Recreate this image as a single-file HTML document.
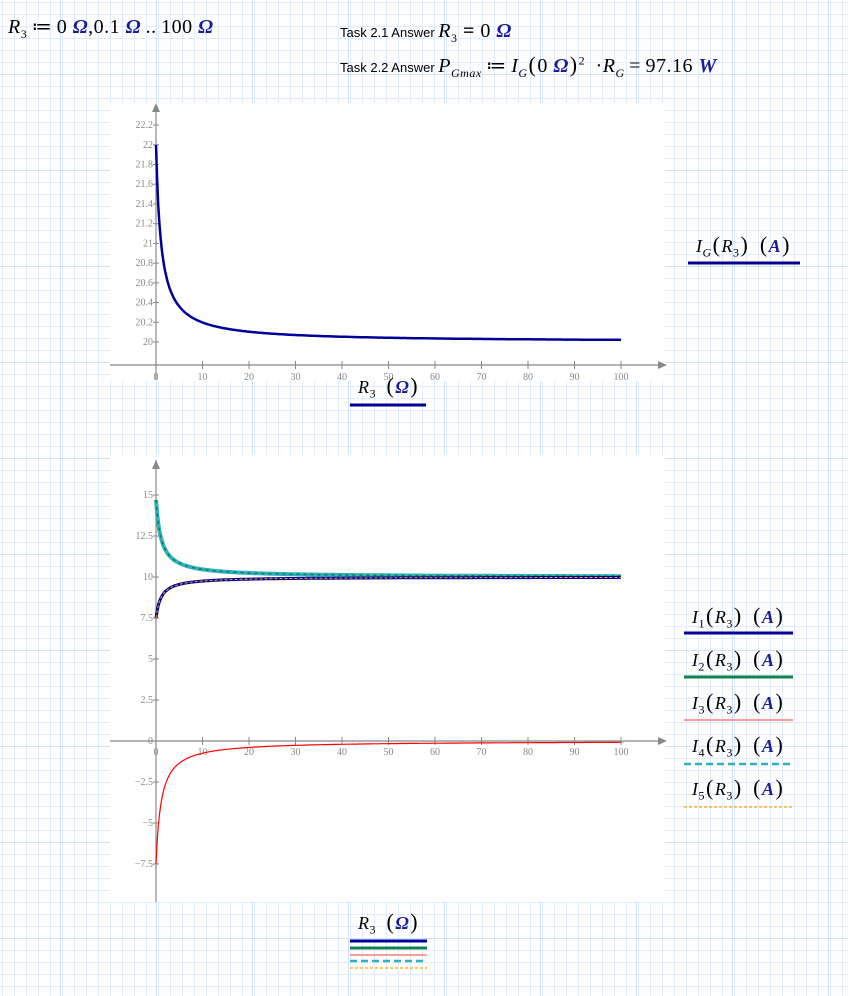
<!DOCTYPE html>
<html><head><meta charset="utf-8">
<style>
html,body{margin:0;padding:0}
body{width:848px;height:996px;position:relative;overflow:hidden;background-color:#fff;
background-image:linear-gradient(to right,#cfe1f8 1px,transparent 1px),linear-gradient(to bottom,#cfe1f8 1px,transparent 1px),linear-gradient(to right,#e0ecfb 1px,transparent 1px),linear-gradient(to bottom,#e0ecfb 1px,transparent 1px);
background-size:96px 96px,96px 96px,12px 12px,12px 12px;background-position:60px 2px,2px 74px,2px 2px,2px 2px;font-family:"Liberation Serif",serif}
.t{position:absolute;white-space:nowrap;color:#000}
.m{font-family:"Liberation Serif",serif;font-size:20px;letter-spacing:0.5px}
.i{font-style:italic}
.b{color:#1a1a9a;font-weight:bold;font-style:italic}
.s{font-size:12px}
.sans{font-family:"Liberation Sans",sans-serif;font-size:13px;letter-spacing:0}
.box{position:absolute;background:#fff}
.p{font-size:22px;margin:0 1px}
svg{position:absolute;left:0;top:0}
</style></head><body>
<div class="t m" style="left:8px;top:14px"><span class="i">R</span><sub class="s">3</sub>&thinsp;≔&thinsp;0 <span class="b">Ω</span>,0.1 <span class="b">Ω</span>&thinsp;..&thinsp;100 <span class="b">Ω</span></div>
<div class="t" style="left:340px;top:20px"><span class="sans">Task 2.1 Answer </span><span class="m"><span class="i">R</span><sub class="s">3</sub> <b>=</b> 0 <span class="b">Ω</span></span></div>
<div class="t" style="left:340px;top:52px"><span class="sans">Task 2.2 Answer </span><span class="m"><span class="i">P</span><sub class="s i">Gmax</sub>&thinsp;≔&thinsp;<span class="i">I</span><sub class="s i">G</sub><span class="p">(</span>0 <span class="b">Ω</span><span class="p">)</span><sup class="s">2</sup>&ensp;·<span class="i">R</span><sub class="s i">G</sub>&thinsp;=&thinsp;97.16 <span class="b">W</span></span></div>
<div class="box" style="left:110px;top:103px;width:555px;height:278px"></div>
<div class="box" style="left:110px;top:455px;width:555px;height:447px"></div>
<svg id="g" width="848" height="996" font-family="Liberation Serif,serif"></svg>
<div class="t m" style="left:358px;top:373px;font-size:18px"><span class="i">R</span><sub class="s">3</sub>&ensp;<span class="p">(</span><span class="b">Ω</span><span class="p">)</span></div>
<div class="t m" style="left:696px;top:232px;font-size:18px"><span class="i">I</span><sub class="s i">G</sub><span class="p">(</span><span class="i">R</span><sub class="s">3</sub><span class="p">)</span>&ensp;<span class="p">(</span><span class="b">A</span><span class="p">)</span></div>
<div class="t m" style="left:358px;top:909px;font-size:18px"><span class="i">R</span><sub class="s">3</sub>&ensp;<span class="p">(</span><span class="b">Ω</span><span class="p">)</span></div>
<div class="t m" style="left:692px;top:603px;font-size:18px"><span class="i">I</span><sub class="s">1</sub><span class="p">(</span><span class="i">R</span><sub class="s">3</sub><span class="p">)</span>&ensp;<span class="p">(</span><span class="b">A</span><span class="p">)</span></div>
<div class="t m" style="left:692px;top:646px;font-size:18px"><span class="i">I</span><sub class="s">2</sub><span class="p">(</span><span class="i">R</span><sub class="s">3</sub><span class="p">)</span>&ensp;<span class="p">(</span><span class="b">A</span><span class="p">)</span></div>
<div class="t m" style="left:692px;top:689px;font-size:18px"><span class="i">I</span><sub class="s">3</sub><span class="p">(</span><span class="i">R</span><sub class="s">3</sub><span class="p">)</span>&ensp;<span class="p">(</span><span class="b">A</span><span class="p">)</span></div>
<div class="t m" style="left:692px;top:732px;font-size:18px"><span class="i">I</span><sub class="s">4</sub><span class="p">(</span><span class="i">R</span><sub class="s">3</sub><span class="p">)</span>&ensp;<span class="p">(</span><span class="b">A</span><span class="p">)</span></div>
<div class="t m" style="left:692px;top:775px;font-size:18px"><span class="i">I</span><sub class="s">5</sub><span class="p">(</span><span class="i">R</span><sub class="s">3</sub><span class="p">)</span>&ensp;<span class="p">(</span><span class="b">A</span><span class="p">)</span></div>
<script>
var s=document.getElementById('g'),h='';
function L(x1,y1,x2,y2,c,w,d){h+='<line x1="'+x1+'" y1="'+y1+'" x2="'+x2+'" y2="'+y2+'" stroke="'+c+'" stroke-width="'+w+'"'+(d?' stroke-dasharray="'+d+'"':'')+'/>';}
function T(x,y,t,a){h+='<text x="'+x+'" y="'+y+'" font-size="10" fill="#888" text-anchor="'+(a||'end')+'">'+t+'</text>';}
function P(f,ox,oy,sy,c,w,d){var p='';for(var r=0;r<=100;r+=0.25){var x=ox+r*4.65,y=oy-f(r)*sy;p+=(r?'L':'M')+x.toFixed(1)+' '+y.toFixed(1);}
h+='<path d="'+p+'" fill="none" stroke="'+c+'" stroke-width="'+w+'"'+(d?' stroke-dasharray="'+d+'"':'')+'/>';}
var ax='#888';
var ox=156,oy1=342,sy1=98.6;
L(ox,108,ox,380,ax,1.2);L(110,365,662,365,ax,1.2);
h+='<path d="M152 112 L156 103 L160 112Z" fill="'+ax+'"/><path d="M658 361 L667 365 L658 369Z" fill="'+ax+'"/>';
for(var v=20;v<=22.21;v+=0.2){var y=oy1-(v-20)*sy1;L(ox-3,y,ox+3,y,ax,1);T(153,y+3,(Math.round(v*10)/10).toString());}
for(var k=0;k<=100;k+=10){var x=ox+k*4.65;L(x,361,x,369,ax,1);T(x,380,k,'middle');}
P(function(r){return 2/(1+r/1.1)},ox,oy1,sy1,'#000099',2.5);
var oy2=741,sy2=16.4;
L(ox,460,ox,902,ax,1.2);L(110,741,662,741,ax,1.2);
h+='<path d="M152 469 L156 460 L160 469Z" fill="'+ax+'"/><path d="M658 737 L667 741 L658 745Z" fill="'+ax+'"/>';
[15,12.5,10,7.5,5,2.5,0,-2.5,-5,-7.5].forEach(function(v){var y=oy2-v*sy2;L(ox-3,y,ox+3,y,ax,1);T(153,y+3,v<0?'−'+(-v):v);});
for(var k=0;k<=100;k+=10){var x=ox+k*4.65;L(x,737,x,745,ax,1);T(x,755,k,'middle');}
var a=1.1;
P(function(r){return 10+4.7/(1+r/a)},ox,oy2,sy2,'#30b0c0',4);
P(function(r){return 10+4.7/(1+r/a)},ox,oy2,sy2,'#108040',1.5,'3 4');
P(function(r){return 10-2.5/(1+r/a)},ox,oy2,sy2,'#000099',3);
P(function(r){return 10-2.5/(1+r/a)},ox,oy2,sy2,'#ffa500',1,'3 2');
P(function(r){return -7.5/(1+r/a)},ox,oy2,sy2,'#ff0000',1.2);
L(688,263,800,263,'#000099',3);
L(350,405,426,405,'#000099',3);
L(684,633,793,633,'#000099',3);
L(684,677,793,677,'#108050',3);
L(684,720,793,720,'#ff6060',1.3);
L(684,764,793,764,'#30b0c0',2.5,'7 4');
L(684,807,793,807,'#ffa500',1.2,'3 2');
L(350,941,427,941,'#000099',3);
L(350,948,427,948,'#108050',3);
L(350,955,427,955,'#ff6060',1.3);
L(350,961,427,961,'#30b0c0',2.5,'7 4');
L(350,968,427,968,'#ffa500',1.2,'3 2');
s.innerHTML=h;
</script>
</body></html>
